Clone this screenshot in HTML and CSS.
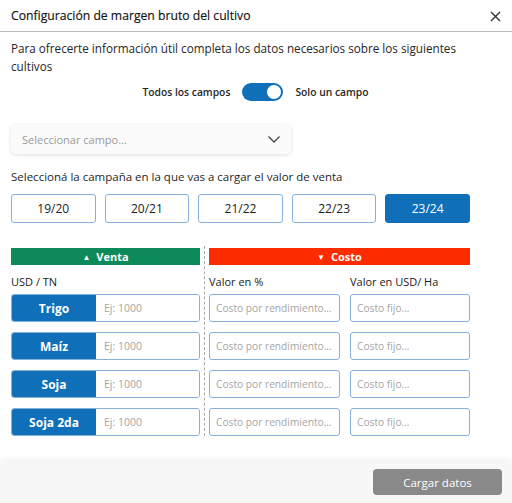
FILE: index.html
```html
<!DOCTYPE html>
<html lang="es">
<head>
  <meta charset="UTF-8">
  <title>Configuración de margen bruto del cultivo</title>
  <link rel="stylesheet" href="styles.css">
</head>
<body>

  <div class="modal">
    <div class="modal-header">
      <span class="modal-title">Configuración de margen bruto del cultivo</span>
      <svg class="close-icon" width="11" height="11" viewBox="0 0 11 11">
        <path d="M1 1 L10 10 M10 1 L1 10" stroke="#333" stroke-width="1.4" fill="none"/>
      </svg>
    </div>

    <div class="modal-body">
      <p class="intro">Para ofrecerte información útil completa los datos necesarios sobre los siguientes cultivos</p>

      <div class="toggle-row">
        <span>Todos los campos</span>
        <div class="switch"><div class="knob"></div></div>
        <span>Solo un campo</span>
      </div>

      <div class="select">
        <span>Seleccionar campo...</span>
        <svg width="12" height="7" viewBox="0 0 12 7">
          <polyline points="0.5,0.5 6,6 11.5,0.5" stroke="#444" stroke-width="1.3" fill="none"/>
        </svg>
      </div>

      <p class="label-campaign">Seleccioná la campaña en la que vas a cargar el valor de venta</p>

      <div class="campaigns">
        <button class="campaign">19/20</button>
        <button class="campaign">20/21</button>
        <button class="campaign">21/22</button>
        <button class="campaign">22/23</button>
        <button class="campaign active">23/24</button>
      </div>

      <div class="table">
        <div class="col-venta">
          <div class="bar bar-venta"><span class="arrow">▲</span> Venta</div>
          <div class="col-label">USD / TN</div>
          <div class="rows">
            <div class="crop-row"><div class="crop">Trigo</div><input placeholder="Ej: 1000"></div>
            <div class="crop-row"><div class="crop">Maíz</div><input placeholder="Ej: 1000"></div>
            <div class="crop-row"><div class="crop">Soja</div><input placeholder="Ej: 1000"></div>
            <div class="crop-row"><div class="crop">Soja 2da</div><input placeholder="Ej: 1000"></div>
          </div>
        </div>

        <div class="divider"></div>

        <div class="col-costo">
          <div class="bar bar-costo"><span class="arrow">▼</span> Costo</div>
          <div class="costo-grid">
            <div class="col-label">Valor en %</div>
            <div class="col-label">Valor en USD/ Ha</div>
            <input class="field" placeholder="Costo por rendimiento...">
            <input class="field" placeholder="Costo fijo...">
            <input class="field" placeholder="Costo por rendimiento...">
            <input class="field" placeholder="Costo fijo...">
            <input class="field" placeholder="Costo por rendimiento...">
            <input class="field" placeholder="Costo fijo...">
            <input class="field" placeholder="Costo por rendimiento...">
            <input class="field" placeholder="Costo fijo...">
          </div>
        </div>
      </div>
    </div>

    <div class="modal-footer">
      <button class="submit">Cargar datos</button>
    </div>
  </div>

</body>
</html>
```

FILE: styles.css
```css
body {
  margin: 0;
  padding: 0;
  background: #fff;
  font-family: 'Open Sans', 'Liberation Sans', sans-serif;
  color: #222;
}

.modal {
  width: 512px;
  height: 503px;
  display: flex;
  flex-direction: column;
  overflow: hidden;
}

.modal-header {
  height: 31px;
  border-bottom: 1px solid #bdbdbd;
  display: flex;
  align-items: center;
  justify-content: space-between;
  padding: 0 11px;
}

.modal-title {
  font-size: 12.2px;
  font-weight: 500;
  color: #111;
  -webkit-text-stroke: 0.15px #111;
}

.close-icon {
  margin-top: 1px;
}

.modal-body {
  padding: 7px 42px 0 11px;
}

.intro {
  margin: 0;
  font-size: 11.7px;
  line-height: 18px;
  color: #262626;
  width: 480px;
}

.toggle-row {
  display: flex;
  align-items: center;
  justify-content: center;
  gap: 12px;
  margin-top: 8px;
  margin-left: 30px;
  font-size: 10.3px;
  font-weight: 600;
  color: #262626;
}

.switch {
  width: 41px;
  height: 18px;
  border-radius: 9px;
  background: #0f6fb8;
  display: flex;
  justify-content: flex-end;
  align-items: center;
  padding: 0 1px;
  box-sizing: border-box;
}

.knob {
  width: 16px;
  height: 16px;
  border-radius: 50%;
  background: #fff;
  border: 1px solid #0f6fb8;
  box-sizing: border-box;
}

.select {
  margin-top: 24px;
  width: 280px;
  height: 29px;
  border-radius: 5px;
  background: #fbfbfb;
  box-shadow: 0 1px 4px rgba(0, 0, 0, 0.13);
  display: flex;
  align-items: center;
  justify-content: space-between;
  padding: 0 11px;
  box-sizing: border-box;
  font-size: 11px;
  color: #9a9a9a;
}

.label-campaign {
  margin: 14px 0 0;
  font-size: 11.5px;
  line-height: 18px;
  color: #262626;
}

.campaigns {
  display: grid;
  grid-template-columns: repeat(5, 1fr);
  gap: 9px;
  margin-top: 8px;
}

.campaign {
  height: 29px;
  background: #fff;
  border: 1px solid #86b0da;
  border-radius: 3px;
  font-family: inherit;
  font-size: 12px;
  color: #222;
  padding: 0;
}

.campaign.active {
  background: #0f6fb8;
  border-color: #0f6fb8;
  color: #fff;
}

.table {
  display: flex;
  margin-top: 23px;
}

.col-venta {
  width: 189px;
  padding-top: 2px;
}

.divider {
  border-left: 1px dashed #a8a8a8;
  margin: 0 4px;
  padding-bottom: 8px;
}

.col-costo {
  flex: 1;
  padding-top: 2px;
}

.bar {
  height: 17px;
  display: flex;
  align-items: center;
  justify-content: center;
  color: #fff;
  font-size: 11px;
  font-weight: 700;
}

.arrow {
  font-size: 8px;
  margin-right: 6px;
}

.bar-venta {
  background: #0c8a5a;
}

.bar-costo {
  background: #fd2c00;
}

.col-label {
  font-size: 11px;
  line-height: 18px;
  font-weight: 500;
  color: #222;
  margin-top: 8px;
  margin-bottom: 3px;
}

.rows {
  display: flex;
  flex-direction: column;
  gap: 10px;
}

.crop-row {
  display: flex;
  height: 28px;
  border: 1px solid #86b0da;
  border-radius: 3px;
  overflow: hidden;
  box-sizing: border-box;
}

.crop {
  width: 84px;
  background: #0f6fb8;
  color: #fff;
  font-size: 12px;
  font-weight: 700;
  display: flex;
  align-items: center;
  justify-content: center;
}

.crop-row input {
  flex: 1;
  min-width: 0;
  border: none;
  outline: none;
  padding: 0 8px;
  font-family: inherit;
  font-size: 10.5px;
}

.costo-grid {
  display: grid;
  grid-template-columns: 131px 120px;
  column-gap: 10px;
  row-gap: 10px;
}

.costo-grid .col-label {
  margin-bottom: -7px;
}

.field {
  height: 28px;
  box-sizing: border-box;
  border: 1px solid #86b0da;
  border-radius: 3px;
  padding: 0 6px;
  font-family: inherit;
  font-size: 10.2px;
  min-width: 0;
  outline: none;
}

input::placeholder {
  color: #a5a5a5;
}

.modal-footer {
  margin-top: auto;
  height: 42px;
  background: #f7f7f7;
  box-shadow: 0 -2px 4px rgba(0, 0, 0, 0.06);
  display: flex;
  align-items: center;
  justify-content: flex-end;
  padding: 0 10px;
}

.submit {
  width: 129px;
  height: 26px;
  background: #898989;
  border: none;
  border-radius: 4px;
  color: #fff;
  font-family: inherit;
  font-size: 11.5px;
  font-weight: 500;
}
```
